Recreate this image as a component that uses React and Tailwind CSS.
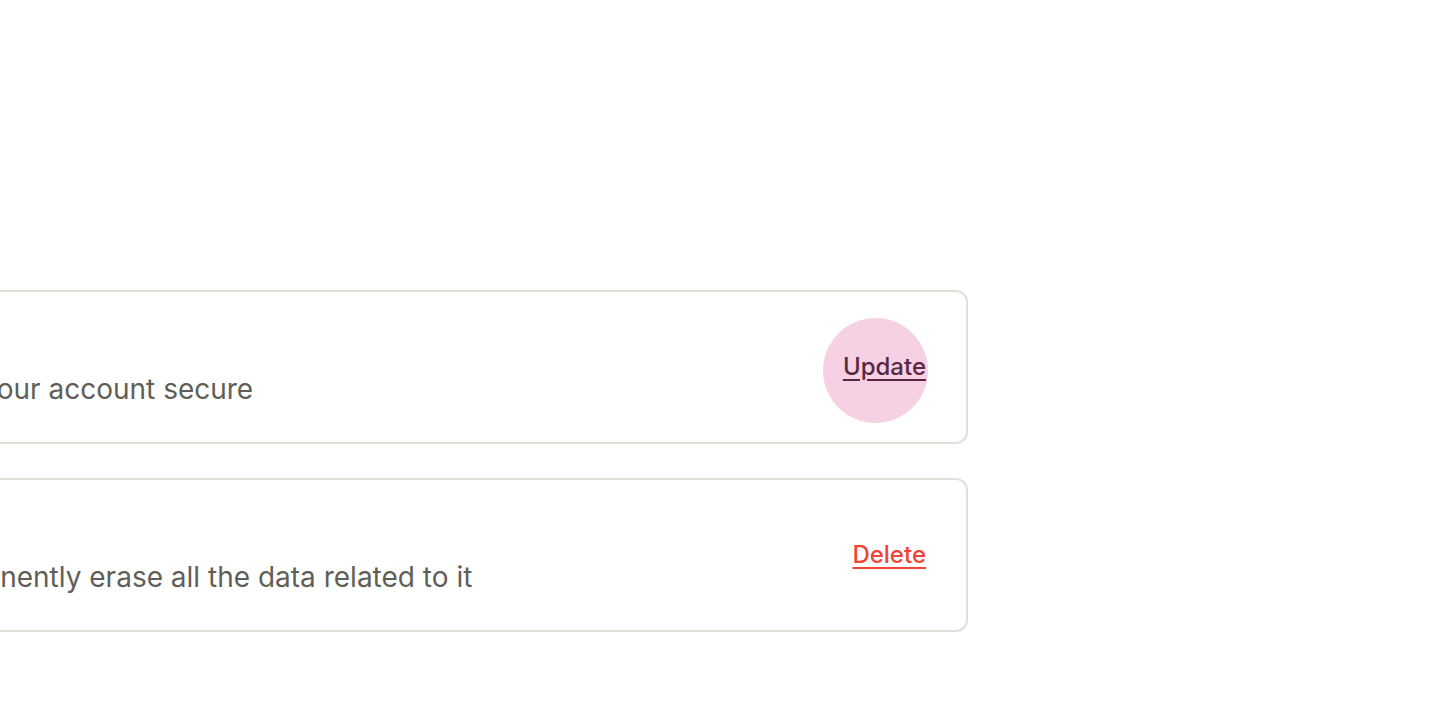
import React from 'react'

const rows = [
  {
    title: 'Password',
    text: 'Change your password to keep your account secure',
    action: 'Update',
    danger: false,
  },
  {
    title: 'Delete account',
    text: 'Removing the account will permanently erase all the data related to it',
    action: 'Delete',
    danger: true,
  },
]

function SettingRow({ title, text, action, danger }) {
  return (
    <div className="flex h-[154px] w-[1449px] items-center justify-between rounded-xl border-2 border-[#e0e0da] bg-white pl-10 pr-10">
      <div className="flex flex-col gap-[12px]">
        <h3 className="text-2xl font-semibold leading-8 text-[#2c2c28]">{title}</h3>
        <p className="text-[28px] leading-9 text-[#5f5f58]">{text}</p>
      </div>
      <button className="relative text-2xl leading-8 font-medium">
        {!danger && (
          <span className="absolute left-[-20px] top-[-33px] h-[105px] w-[105px] rounded-full bg-[#f6d1e4]" />
        )}
        <span
          className={
            'relative underline decoration-2 underline-offset-[4px] ' +
            (danger ? 'text-[#f04438]' : 'text-[#5a2741]')
          }
        >
          {action}
        </span>
      </button>
    </div>
  )
}

export default function App() {
  return (
    <div className="h-[727px] w-[1440px] overflow-hidden bg-white font-['Inter',sans-serif]">
      <div className="ml-[-481px] flex flex-col gap-[34px] pt-[290px]">
        {rows.map((r) => (
          <SettingRow key={r.action} {...r} />
        ))}
      </div>
    </div>
  )
}
